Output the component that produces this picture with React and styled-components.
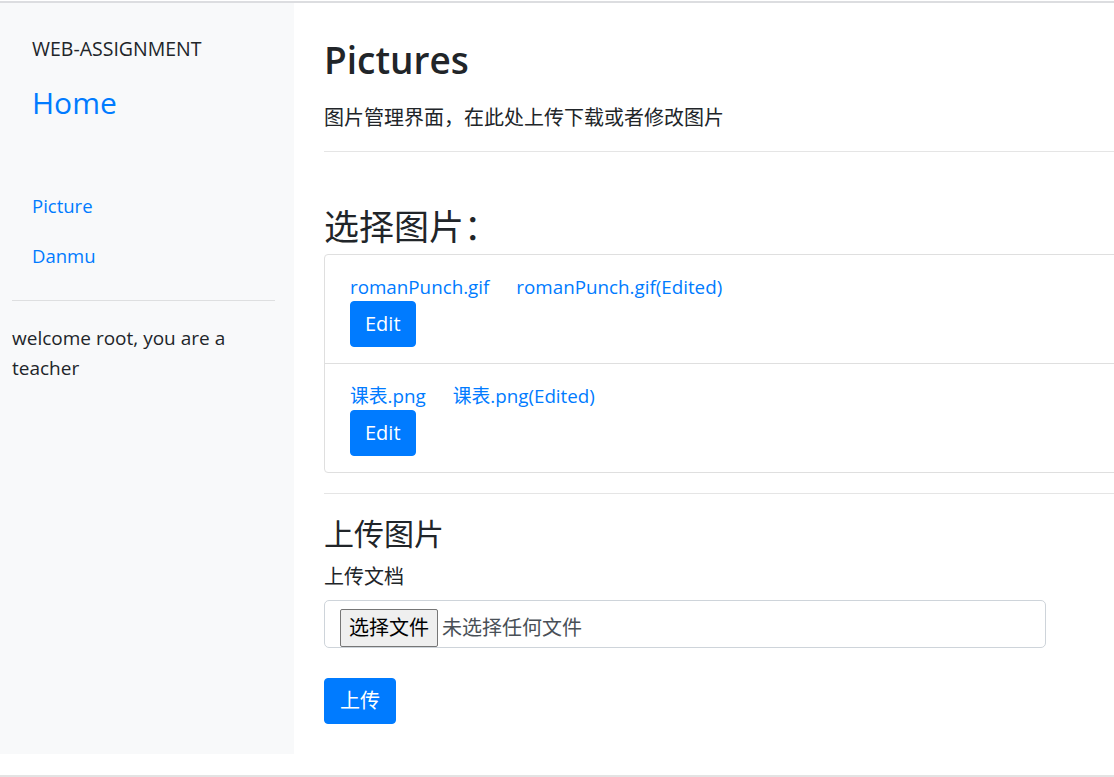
import React from 'react';
import styled, { createGlobalStyle } from 'styled-components';

const GlobalStyle = createGlobalStyle`
    html, body {
        margin: 0;
        padding: 0;
        background: #ffffff;
    }

    body {
        padding-top: 1px;
        font-family: 'Open Sans', 'Noto Sans CJK SC', sans-serif;
        color: #212529;
        overflow: hidden;
    }
`;

const Frame = styled.div`
    height: 772px;
    border-top: 2px solid #dcdde0;
    border-bottom: 2px solid #e3e3e3;
    display: flex;
    align-items: flex-start;
    overflow: hidden;
`;

const Sidebar = styled.nav`
    width: 294px;
    height: 751px;
    flex-shrink: 0;
    box-sizing: border-box;
    padding: 0 19px 0 12px;
    background-color: #f8f9fa;
`;

const Brand = styled.div`
    padding: 33px 0 0 20px;
    font-size: 19.5px;
    line-height: 26px;
    color: #212529;
`;

const HomeLink = styled.a`
    display: block;
    margin-top: 24px;
    padding-left: 20px;
    font-size: 30px;
    font-weight: 500;
    line-height: 34px;
    color: #007bff;
    text-decoration: none;
`;

const NavList = styled.ul`
    list-style: none;
    margin: 61px 0 0;
    padding: 0;
`;

const NavItem = styled.li`
    padding: 13px 0 13px 20px;
    font-size: 18.5px;
    line-height: 24px;

    a {
        color: #007bff;
        text-decoration: none;
    }
`;

const Rule = styled.hr`
    margin: ${(p) => p.$margin || '0'};
    border: 0;
    border-top: 1px solid ${(p) => p.$color || '#e5e5e5'};
`;

const Welcome = styled.p`
    margin: 22px 0 0;
    font-size: 19px;
    line-height: 30px;
`;

const Main = styled.main`
    flex: 1;
    min-width: 0;
    padding: 0 0 0 30px;
`;

const Title = styled.h1`
    margin: 31px 0 0;
    font-size: 37px;
    font-weight: 600;
    line-height: 52px;
`;

const Lead = styled.p`
    margin: 18px 0 0;
    font-size: 20px;
    font-weight: 400;
    line-height: 28px;
`;

const SectionTitle = styled.h2`
    margin: ${(p) => p.$margin || '0'};
    font-size: ${(p) => p.$size || '32px'};
    font-weight: 400;
    line-height: 1.2;
`;

const ListGroup = styled.ul`
    list-style: none;
    margin: 6px -20px 0 0;
    padding: 0;
    border: 1px solid #dfdfdf;
    border-radius: 4px;
`;

const ListItem = styled.li`
    padding: 20px 25px 16px;

    & + & {
        border-top: 1px solid #dfdfdf;
    }
`;

const LinkRow = styled.div`
    display: flex;
    gap: 27px;
    font-size: 18.8px;
    line-height: 24px;

    a {
        color: #007bff;
        text-decoration: none;
    }
`;

const PrimaryButton = styled.button`
    display: inline-block;
    margin-top: ${(p) => p.$top || '2px'};
    padding: 7px ${(p) => p.$pad || '14px'};
    border: 1px solid #007bff;
    border-radius: 4px;
    background-color: #007bff;
    color: #ffffff;
    font-family: 'Open Sans', 'Noto Sans CJK SC', sans-serif;
    font-size: 20px;
    line-height: 30px;
    cursor: pointer;
`;

const FieldLabel = styled.label`
    display: block;
    margin-top: 13px;
    font-size: 20px;
    line-height: 24px;
`;

const FileField = styled.div`
    width: 722px;
    height: 48px;
    margin-top: 11px;
    box-sizing: border-box;
    padding: 8px 0 0 15px;
    border: 1px solid #ced4da;
    border-radius: 5px;
    display: flex;
    align-items: flex-start;
    gap: 4px;
`;

const ChooseButton = styled.span`
    display: inline-block;
    height: 38px;
    box-sizing: border-box;
    padding: 0 8px;
    border: 1px solid #767676;
    border-radius: 2px;
    background-color: #efefef;
    color: #000000;
    font-size: 20px;
    line-height: 36px;
`;

const FileStatus = styled.span`
    font-size: 20px;
    line-height: 38px;
    color: #495057;
`;

const pictures = [
    { name: 'romanPunch.gif' },
    { name: '课表.png' },
];

const App = () => {
    return (
        <>
            <GlobalStyle />
            <Frame>
                <Sidebar>
                    <Brand>WEB-ASSIGNMENT</Brand>
                    <HomeLink href="#">Home</HomeLink>
                    <NavList>
                        <NavItem><a href="#">Picture</a></NavItem>
                        <NavItem><a href="#">Danmu</a></NavItem>
                    </NavList>
                    <Rule $margin="19px 0 0" $color="#dedfe0" />
                    <Welcome>welcome root, you are a teacher</Welcome>
                </Sidebar>
                <Main>
                    <Title>Pictures</Title>
                    <Lead>图片管理界面，在此处上传下载或者修改图片</Lead>
                    <Rule $margin="19px 0 0" />
                    <SectionTitle $margin="54px 0 0" $size="35px">选择图片：</SectionTitle>
                    <ListGroup>
                        {pictures.map((pic) => (
                            <ListItem key={pic.name}>
                                <LinkRow>
                                    <a href="#">{pic.name}</a>
                                    <a href="#">{pic.name}(Edited)</a>
                                </LinkRow>
                                <PrimaryButton>Edit</PrimaryButton>
                            </ListItem>
                        ))}
                    </ListGroup>
                    <Rule $margin="20px 0 0" />
                    <SectionTitle $margin="22px 0 0" $size="30px">上传图片</SectionTitle>
                    <FieldLabel>上传文档</FieldLabel>
                    <FileField>
                        <ChooseButton>选择文件</ChooseButton>
                        <FileStatus>未选择任何文件</FileStatus>
                    </FileField>
                    <PrimaryButton $top="30px" $pad="15px">上传</PrimaryButton>
                </Main>
            </Frame>
        </>
    );
};

export default App;
